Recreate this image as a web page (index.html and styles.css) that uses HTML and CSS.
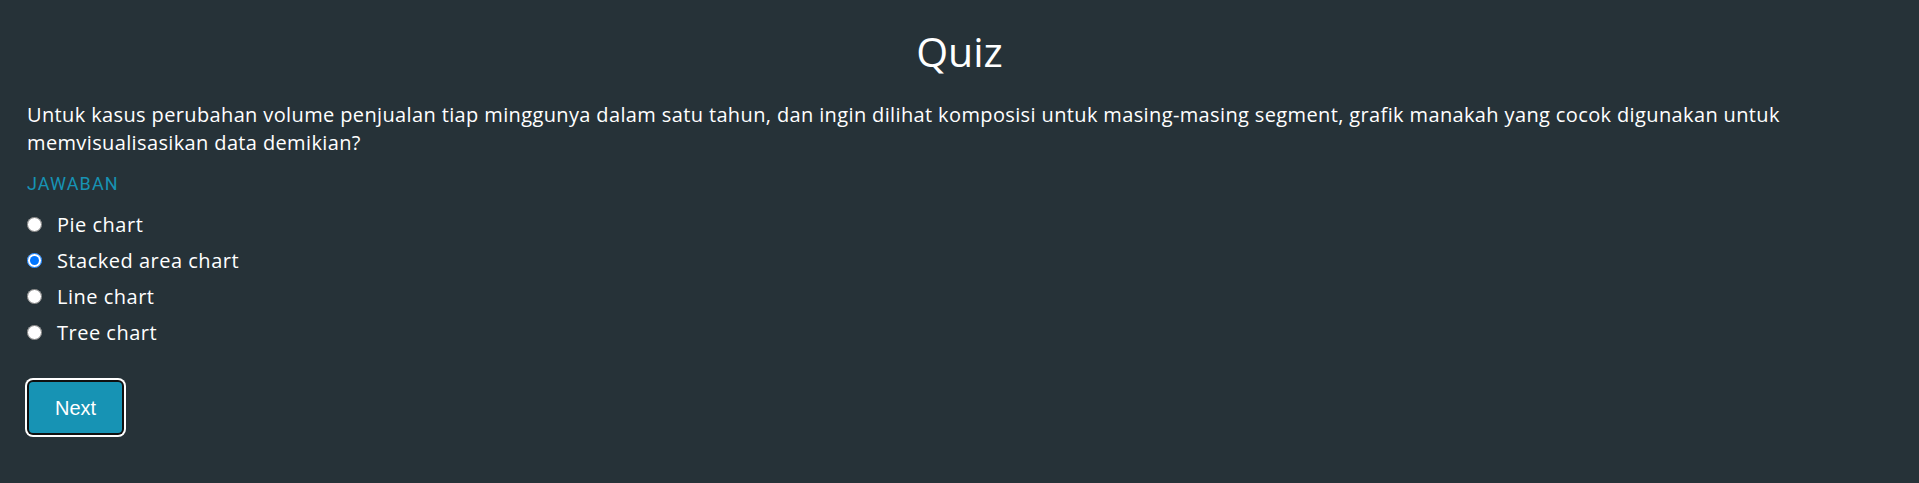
FILE: index.html
```html
<!DOCTYPE html>
<html lang="id">
<head>
<meta charset="utf-8">
<title>Quiz</title>
<link rel="stylesheet" href="styles.css">
</head>
<body>
<main class="quiz">
  <h1 class="quiz-title">Quiz</h1>
  <p class="question">Untuk kasus perubahan volume penjualan tiap minggunya dalam satu tahun, dan ingin dilihat komposisi untuk masing-masing segment, grafik manakah yang cocok digunakan untuk memvisualisasikan data demikian?</p>
  <div class="answer-label">JAWABAN</div>
  <form class="options">
    <label class="option"><input type="radio" name="ans" class="radio"><span>Pie chart</span></label>
    <label class="option"><input type="radio" name="ans" class="radio" checked><span>Stacked area chart</span></label>
    <label class="option"><input type="radio" name="ans" class="radio"><span>Line chart</span></label>
    <label class="option"><input type="radio" name="ans" class="radio"><span>Tree chart</span></label>
  </form>
  <div class="actions">
    <button type="button" class="next-btn">Next</button>
  </div>
</main>
</body>
</html>
```
FILE: styles.css
```css
html, body {
  margin: 0;
  padding: 0;
  background: #263238;
  height: 100%;
}
body {
  color: #ffffff;
  font-family: "Open Sans", sans-serif;
}
.quiz {
  padding: 0 27px;
  display: flex;
  flex-direction: column;
}
.quiz-title {
  margin: 25px 0 0;
  text-align: center;
  font-size: 41px;
  line-height: 52px;
  font-weight: 500;
}
.question {
  margin: 24px 0 0;
  font-size: 20px;
  letter-spacing: 0.37px;
  line-height: 28px;
}
.answer-label {
  margin-top: 15px;
  font-family: Roboto, sans-serif;
  font-size: 18px;
  line-height: 24px;
  color: #1793b4;
  letter-spacing: 1.1px;
}
.options {
  margin-top: 10px;
  display: flex;
  flex-direction: column;
}
.option {
  display: flex;
  align-items: center;
  gap: 15px;
  height: 36px;
  font-size: 20px;
  letter-spacing: 0.5px;
}
.radio {
  margin: 0;
  width: 15px;
  height: 15px;
}
.actions {
  margin-top: 32px;
  padding-left: 2px;
}
.next-btn {
  font-family: "Liberation Sans", Arial, sans-serif;
  font-size: 20px;
  line-height: 24px;
  color: #ffffff;
  background: #1793b4;
  border: none;
  border-radius: 4px;
  padding: 14px 26px 13px;
  box-shadow: 0 0 0 2px #101010, 0 0 0 4px #ffffff;
}
```
